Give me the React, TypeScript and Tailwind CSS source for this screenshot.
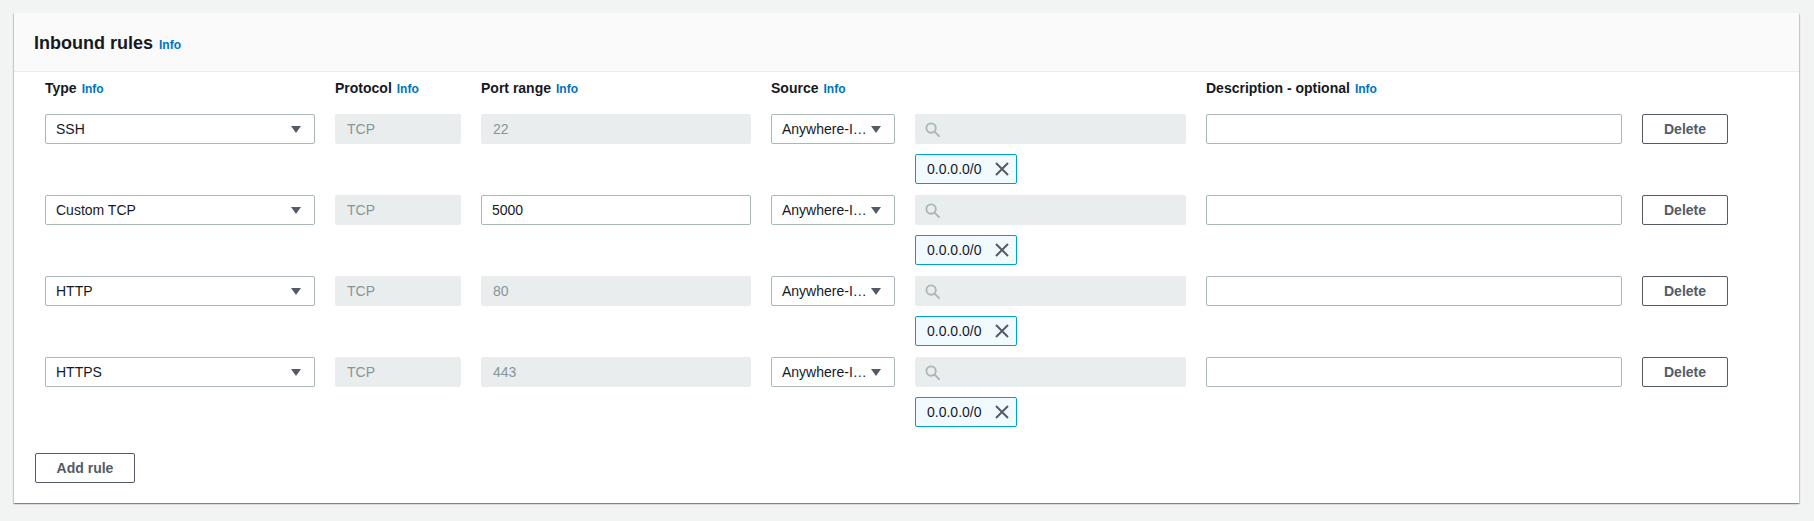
const cols = "grid grid-cols-[270px_126px_270px_124px_271px_416px_86px] gap-x-[20px]";

const rules = [
  { type: "SSH", port: "22", editable: false },
  { type: "Custom TCP", port: "5000", editable: true },
  { type: "HTTP", port: "80", editable: false },
  { type: "HTTPS", port: "443", editable: false },
];

const Info = () => <span className="ml-[5px] text-[12px] font-bold leading-none text-[#0073bb]">Info</span>;

const Caret = () => (
  <svg width="10" height="7" viewBox="0 0 10 7" className="shrink-0">
    <path d="M0 0h10L5 7z" fill="#545b64" />
  </svg>
);

const SearchIcon = () => (
  <svg width="15" height="15" viewBox="0 0 16 16" fill="none" stroke="#aab7b8" strokeWidth="2">
    <circle cx="6.5" cy="6.5" r="5" />
    <path d="M10.2 10.2l4.8 4.8" strokeLinecap="round" />
  </svg>
);

const Dismiss = () => (
  <svg width="14" height="14" viewBox="0 0 14 14" fill="none" stroke="#545b64" strokeWidth="2">
    <path d="M1 1l12 12M13 1L1 13" />
  </svg>
);

const Label = ({ text }: { text?: string }) =>
  text ? (
    <div className="h-[22px] text-[14px] font-bold leading-[22px] text-[#16191f]">
      {text}
      <Info />
    </div>
  ) : (
    <div />
  );

const Disabled = ({ value }: { value: string }) => (
  <div className="flex h-[30px] items-center rounded-[2px] border border-[#eaeded] bg-[#eaeded] pl-[11px] text-[14px] text-[#879596]">
    {value}
  </div>
);

const Button = ({ children, className = "" }: { children: string; className?: string }) => (
  <button
    className={`flex h-[30px] items-center justify-center rounded-[2px] border border-[#545b64] bg-white text-[14px] font-bold text-[#545b64] ${className}`}
  >
    {children}
  </button>
);

const RuleRow = ({ rule }) => (
  <div className={cols}>
    <div className="flex h-[30px] items-center justify-between rounded-[2px] border border-[#aab7b8] bg-white pl-[10px] pr-[13px] text-[14px] text-[#16191f]">
      <span>{rule.type}</span>
      <Caret />
    </div>
    <Disabled value="TCP" />
    {rule.editable ? (
      <div className="flex h-[30px] items-center rounded-[2px] border border-[#aab7b8] bg-white pl-[10px] text-[14px] text-[#16191f]">
        {rule.port}
      </div>
    ) : (
      <Disabled value={rule.port} />
    )}
    <div className="flex h-[30px] items-center justify-between rounded-[2px] border border-[#aab7b8] bg-white pl-[10px] pr-[13px] text-[14px] text-[#16191f]">
      <span className="whitespace-nowrap">Anywhere-I…</span>
      <Caret />
    </div>
    <div className="flex flex-col gap-[10px]">
      <div className="flex h-[30px] items-center rounded-[2px] bg-[#eaeded] pl-[10px]">
        <SearchIcon />
      </div>
      <div className="flex h-[30px] w-[102px] items-center justify-between rounded-[2px] border border-[#00a1c9] bg-[#f1faff] pl-[11px] pr-[7px] text-[14px] text-[#16191f]">
        <span>0.0.0.0/0</span>
        <Dismiss />
      </div>
    </div>
    <div className="h-[30px] rounded-[2px] border border-[#aab7b8] bg-white" />
    <Button>Delete</Button>
  </div>
);

export default function App() {
  return (
    <div className="min-h-[521px] bg-[#f2f3f3] pb-[18px] pl-[14px] pr-[15px] pt-[13px] font-['Liberation_Sans',Arial,sans-serif]">
      <div className="bg-white shadow-[0_1px_1px_0_rgba(0,28,36,0.3),1px_1px_1px_0_rgba(0,28,36,0.15),-1px_1px_1px_0_rgba(0,28,36,0.15)]">
        <div className="h-[59px] border-b border-[#eaeded] bg-[#fafafa] px-[20px] pt-[19px] leading-[22px]">
          <span className="text-[18px] font-bold text-[#16191f]">Inbound rules</span>
          <span className="ml-[6px] text-[12px] font-bold leading-none text-[#0073bb]">Info</span>
        </div>
        <div className="px-[21px] pb-[20px] pt-[5px]">
          <div className="pl-[10px]">
            <div className={`${cols} mb-[15px]`}>
              <Label text="Type" />
              <Label text="Protocol" />
              <Label text="Port range" />
              <Label text="Source" />
              <Label />
              <Label text="Description - optional" />
              <Label />
            </div>
            <div className="flex flex-col gap-[11px]">
              {rules.map((rule) => (
                <RuleRow key={rule.type} rule={rule} />
              ))}
            </div>
          </div>
          <Button className="mt-[26px] w-[100px]">Add rule</Button>
        </div>
      </div>
    </div>
  );
}
